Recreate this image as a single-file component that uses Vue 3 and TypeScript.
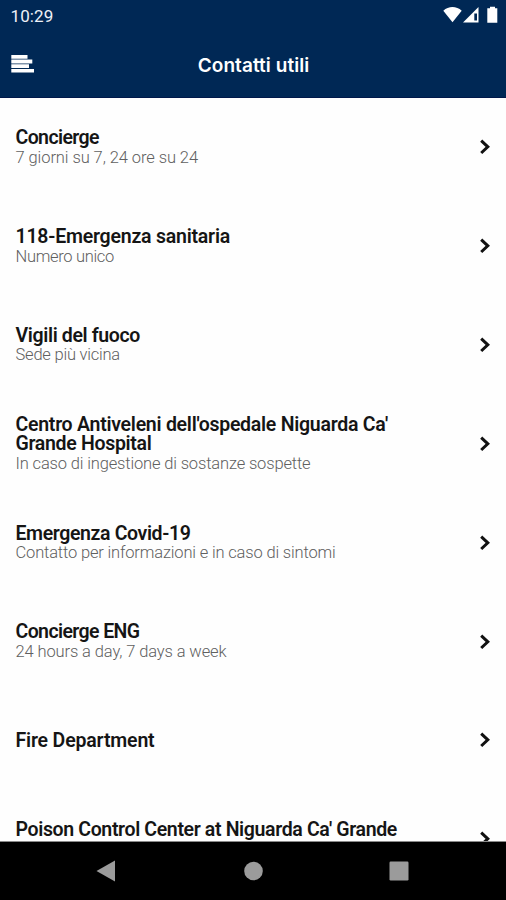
<script setup lang="ts">
interface Line {
  text: string
  width: number
}
interface Contact {
  title: Line[]
  note?: Line
  tall?: boolean
}

const contacts: Contact[] = [
  { title: [{ text: 'Concierge', width: 83.5 }], note: { text: '7 giorni su 7, 24 ore su 24', width: 182.5 } },
  { title: [{ text: '118-Emergenza sanitaria', width: 214.5 }], note: { text: 'Numero unico', width: 98.5 } },
  { title: [{ text: 'Vigili del fuoco', width: 124.5 }], note: { text: 'Sede più vicina', width: 104.5 } },
  {
    title: [
      { text: "Centro Antiveleni dell'ospedale Niguarda Ca'", width: 372.5 },
      { text: 'Grande Hospital', width: 136 },
    ],
    note: { text: 'In caso di ingestione di sostanze sospette', width: 295 },
  },
  { title: [{ text: 'Emergenza Covid-19', width: 175 }], note: { text: 'Contatto per informazioni e in caso di sintomi', width: 320 } },
  { title: [{ text: 'Concierge ENG', width: 124 }], note: { text: '24 hours a day, 7 days a week', width: 211 } },
  { title: [{ text: 'Fire Department', width: 139 }] },
  { title: [{ text: "Poison Control Center at Niguarda Ca' Grande", width: 381.5 }], tall: true },
]

// Tracks a line of text so that it takes up the given width.
const vFit = {
  mounted(el: HTMLElement, binding: { value: number }) {
    const natural = el.getBoundingClientRect().width
    const count = (el.textContent ?? '').length
    el.style.letterSpacing = `${(binding.value - natural) / count}px`
  },
}
</script>

<template>
  <div class="screen">
    <header class="top">
      <div class="status">
        <span v-fit="43" class="clock">10:29</span>
        <svg class="indicators" width="56" height="18" viewBox="0 0 56 18">
          <path d="M0.3 4.8C5.5 -0.2 13.5 -0.2 18.7 4.8L9.5 16.3Z" fill="#fff" />
          <path d="M20 16.5L35.5 1V16.5Z" fill="#fff" />
          <path d="M31.3 7.5H34V14.5H31.3Z" fill="#002855" />
          <path d="M45 2.3H47V0.7H52V2.3H54.3V16.7H44.3V2.3Z" fill="#fff" />
        </svg>
      </div>
      <div class="bar">
        <svg class="menu" width="24" height="20" viewBox="0 0 24 20">
          <path d="M0.3 0.9H16.5V4.7H0.3ZM0.3 5.4H21.3V9.4H0.3ZM0.3 10.2H18V14H0.3ZM0.3 14.9H23V18.6H0.3Z" fill="#fff" />
        </svg>
        <h1><span v-fit="111.5">Contatti utili</span></h1>
      </div>
    </header>

    <main class="list">
      <div v-for="(contact, i) in contacts" :key="i" class="row">
        <div class="copy" :class="{ tall: contact.tall }">
          <div v-for="line in contact.title" :key="line.text" class="title">
            <span v-fit="line.width">{{ line.text }}</span>
          </div>
          <div v-if="contact.note" class="note">
            <span v-fit="contact.note.width">{{ contact.note.text }}</span>
          </div>
        </div>
        <svg class="chevron" width="12" height="18" viewBox="0 0 12 18">
          <path d="M2.2 2.6L8.8 8.8L2.2 15" fill="none" stroke="#111" stroke-width="3" />
        </svg>
      </div>
    </main>

    <nav class="system">
      <svg width="20" height="22" viewBox="0 0 20 22"><path d="M0.5 11L19 0.5V21.5Z" fill="#9b9b9b" /></svg>
      <svg width="20" height="20" viewBox="0 0 20 20"><circle cx="10.5" cy="10" r="9.3" fill="#9b9b9b" /></svg>
      <svg width="20" height="20" viewBox="0 0 20 20"><rect x="0.5" y="0.5" width="19" height="19" rx="1.2" fill="#9b9b9b" /></svg>
    </nav>
  </div>
</template>

<style>
body {
  margin: 0;
}
</style>

<style scoped>
.screen {
  display: flex;
  flex-direction: column;
  width: 506px;
  height: 900px;
  overflow: hidden;
  background: #fefefe;
  font-family: Roboto, 'Liberation Sans', sans-serif;
}
.top {
  flex: none;
  box-sizing: border-box;
  height: 98px;
  background: #002855;
  border-bottom: 1px solid #00184a;
  color: #fff;
}
.status {
  display: flex;
  justify-content: space-between;
  align-items: center;
  height: 32px;
  padding: 0 7px 0 10.5px;
}
.clock {
  font-size: 17px;
  line-height: 32px;
  color: #eef1f7;
}
.indicators {
  margin-bottom: 3px;
}
.bar {
  display: grid;
  grid-template-columns: 24px 1fr 24px;
  align-items: center;
  height: 66px;
  padding: 0 10px 0 11px;
}
.menu {
  margin-bottom: 2px;
}
h1 {
  margin: 0;
  padding-top: 2px;
  font: 600 19px/24px Inter, 'Liberation Sans', Arial, sans-serif;
  text-align: center;
  white-space: nowrap;
}
.list {
  flex: 1;
  min-height: 0;
  box-sizing: border-box;
  overflow: hidden;
  border-bottom: 1px solid #8a8a8a;
}
.row {
  display: flex;
  justify-content: space-between;
  align-items: center;
  box-sizing: border-box;
  height: 98.85px;
  padding: 0 15px 0 15.5px;
}
.tall {
  min-height: 39px;
}
.title,
.note {
  white-space: nowrap;
}
.title {
  font-size: 19.5px;
  line-height: 19.5px;
  font-weight: 600;
  color: #151515;
}
.note {
  font-size: 16.5px;
  line-height: 19px;
  font-weight: 300;
  color: #606060;
}
.chevron {
  flex: none;
}
.system {
  flex: none;
  display: flex;
  justify-content: space-between;
  align-items: center;
  height: 58px;
  padding: 0 97px 0 96px;
  box-sizing: border-box;
  background: #000;
}
</style>
